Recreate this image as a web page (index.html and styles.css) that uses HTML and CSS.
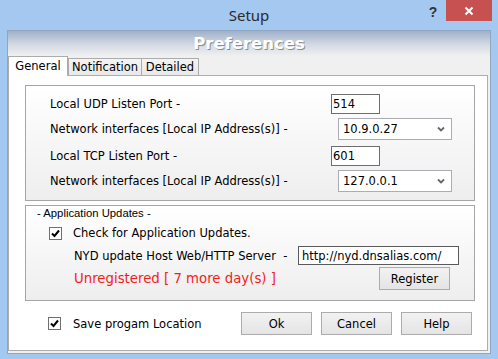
FILE: index.html
```html
<!DOCTYPE html>
<html lang="en">
<head>
    <meta charset="UTF-8">
    <title>Setup</title>
    <link rel="stylesheet" href="styles.css">
</head>
<body>
    <div class="window">
        <div class="titlebar">
            <span class="title">Setup</span>
            <span class="help">?</span>
            <span class="close">
                <svg width="10" height="10" viewBox="0 0 10 10"><path d="M1.5 1.5 L8.5 8.5 M8.5 1.5 L1.5 8.5" stroke="#fff" stroke-width="2"/></svg>
            </span>
        </div>
        <div class="client">
            <div class="banner">Preferences</div>
            <div class="tabs">
                <div class="tab active">General</div>
                <div class="tab tab-notify">Notification</div>
                <div class="tab tab-detail">Detailed</div>
            </div>
            <div class="panel">
                <div class="group ports">
                    <div class="row row-text">
                        <span class="label">Local UDP Listen Port -</span>
                        <input class="textbox" type="text" value="514">
                    </div>
                    <div class="row row-combo">
                        <span class="label label-wide">Network interfaces [Local IP Address(s)] -</span>
                        <div class="combo"><span>10.9.0.27</span>
                            <svg width="8" height="6" viewBox="0 0 8 6"><path d="M1 1.5 L4 4.5 L7 1.5" fill="none" stroke="#666" stroke-width="1.8"/></svg>
                        </div>
                    </div>
                    <div class="row row-text gap-big">
                        <span class="label">Local TCP Listen Port -</span>
                        <input class="textbox" type="text" value="601">
                    </div>
                    <div class="row row-combo">
                        <span class="label label-wide">Network interfaces [Local IP Address(s)] -</span>
                        <div class="combo"><span>127.0.0.1</span>
                            <svg width="8" height="6" viewBox="0 0 8 6"><path d="M1 1.5 L4 4.5 L7 1.5" fill="none" stroke="#666" stroke-width="1.8"/></svg>
                        </div>
                    </div>
                </div>

                <div class="group updates">
                    <div class="legend">- Application Updates -</div>
                    <div class="row check-row">
                        <span class="checkbox"><svg width="11" height="11" viewBox="0 0 11 11"><path d="M2 5.5 L4.5 8 L9 2.5" fill="none" stroke="#000" stroke-width="2"/></svg></span>
                        <span>Check for Application Updates.</span>
                    </div>
                    <div class="row server-row">
                        <span class="server-label">NYD update Host Web/HTTP Server&nbsp; -</span>
                        <input class="textbox url" type="text" value="http://nyd.dnsalias.com/">
                    </div>
                    <div class="row reg-row">
                        <span class="unregistered">Unregistered [ 7 more day(s) ]</span>
                        <button class="btn">Register</button>
                    </div>
                </div>

                <div class="row footer">
                    <span class="checkbox"><svg width="11" height="11" viewBox="0 0 11 11"><path d="M2 5.5 L4.5 8 L9 2.5" fill="none" stroke="#000" stroke-width="2"/></svg></span>
                    <span>Save progam Location</span>
                    <div class="buttons">
                        <button class="btn">Ok</button>
                        <button class="btn">Cancel</button>
                        <button class="btn">Help</button>
                    </div>
                </div>
            </div>
        </div>
    </div>
</body>
</html>
```

FILE: styles.css
```css
body {
    margin: 0;
    font-family: "DejaVu Sans", Verdana, sans-serif;
    font-size: 11.5px;
    color: #000;
}
.window {
    width: 498px;
    height: 359px;
    background: #a4c8f0;
    overflow: hidden;
}
.titlebar {
    height: 30px;
    display: flex;
    align-items: flex-start;
}
.title {
    flex: 1;
    text-align: center;
    padding-left: 78px;
    font-family: "Noto Sans", sans-serif;
    font-size: 15px;
    line-height: 30px;
    color: #2b2b2b;
}
.help {
    width: 26px;
    text-align: center;
    font-family: "Liberation Sans", sans-serif;
    font-weight: bold;
    font-size: 14px;
    line-height: 24px;
    color: #333;
}
.close {
    width: 46px;
    height: 21px;
    margin-right: 6px;
    background: #c75050;
    display: flex;
    align-items: center;
    justify-content: center;
}
.client {
    margin-left: 7px;
    width: 484px;
    height: 324px;
    box-sizing: border-box;
    border: 1px solid #8fa6c2;
    background: #f0f0f0;
}
.banner {
    height: 25px;
    line-height: 26px;
    text-align: center;
    background: linear-gradient(#9fb1c9, #d4dae3 55%, #eff0f1);
    color: #fff;
    font-weight: bold;
    font-size: 16.5px;
    text-shadow: 1px 1px 0 #8c8c8c;
}
.tabs {
    display: flex;
    align-items: flex-end;
    height: 19px;
}
.tab {
    height: 17px;
    box-sizing: border-box;
    border: 1px solid #acacac;
    border-bottom: none;
    background: linear-gradient(#f4f4f4, #e8e8e8);
    text-align: center;
    line-height: 17px;
}
.tab.active {
    width: 60px;
    height: 20px;
    margin-bottom: -1px;
    background: #fff;
    position: relative;
    z-index: 1;
    line-height: 19px;
}
.tab-notify {
    width: 74px;
}
.tab-detail {
    width: 57px;
    border-left: none;
}
.panel {
    margin-right: 2px;
    height: 276px;
    box-sizing: border-box;
    border: 1px solid #adadad;
    background: #fff;
    padding: 9px 12px 0 16px;
}
.group {
    border: 1px solid #a5a5a5;
    background: linear-gradient(#fff, #eeeeee);
    box-sizing: border-box;
}
.row {
    display: flex;
    align-items: center;
}
.ports {
    height: 116px;
    padding: 8px 0 0 24px;
}
.row-text {
    height: 20px;
}
.row-combo {
    height: 22px;
    margin-top: 4px;
}
.gap-big {
    margin-top: 6px;
}
.label {
    width: 281px;
}
.label-wide {
    width: 288px;
}
.textbox {
    width: 49px;
    height: 20px;
    box-sizing: border-box;
    border: 1px solid #6e6e6e;
    padding: 0 1px;
    margin: 0;
    font: inherit;
    color: #000;
    background: #fff;
    outline: none;
}
.combo {
    width: 114px;
    height: 22px;
    box-sizing: border-box;
    border: 1px solid #abadb3;
    background: #fff;
    padding: 0 6px 0 4px;
    display: flex;
    align-items: center;
    justify-content: space-between;
}
.updates {
    margin-top: 4px;
    height: 96px;
}
.legend {
    padding-left: 11px;
    height: 14px;
    line-height: 14px;
    font-family: "Liberation Sans", Arial, sans-serif;
    font-size: 11.3px;
}
.check-row {
    height: 16px;
    margin: 5px 0 0 23px;
    gap: 11px;
}
.checkbox {
    width: 13px;
    height: 13px;
    box-sizing: border-box;
    border: 1px solid #707070;
    background: #fff;
    display: flex;
    align-items: center;
    justify-content: center;
}
.server-row {
    height: 19px;
    margin: 5px 0 0 48px;
}
.server-label {
    width: 224px;
}
.textbox.url {
    width: 161px;
    height: 19px;
    padding: 0 3px;
    border-color: #5a5a5a;
}
.reg-row {
    height: 23px;
    margin: 2px 0 0 48px;
}
.unregistered {
    width: 305px;
    color: #f41c1c;
    font-size: 13.3px;
}
.btn {
    width: 71px;
    height: 23px;
    box-sizing: border-box;
    border: 1px solid #acacac;
    background: linear-gradient(#f2f2f2, #e4e4e4);
    font: inherit;
    color: #000;
    padding: 0;
    margin: 0;
}
.footer {
    height: 23px;
    margin: 11px 0 0 23px;
    gap: 12px;
}
.buttons {
    margin-left: auto;
    margin-right: 3px;
    display: flex;
    gap: 9px;
}
```
